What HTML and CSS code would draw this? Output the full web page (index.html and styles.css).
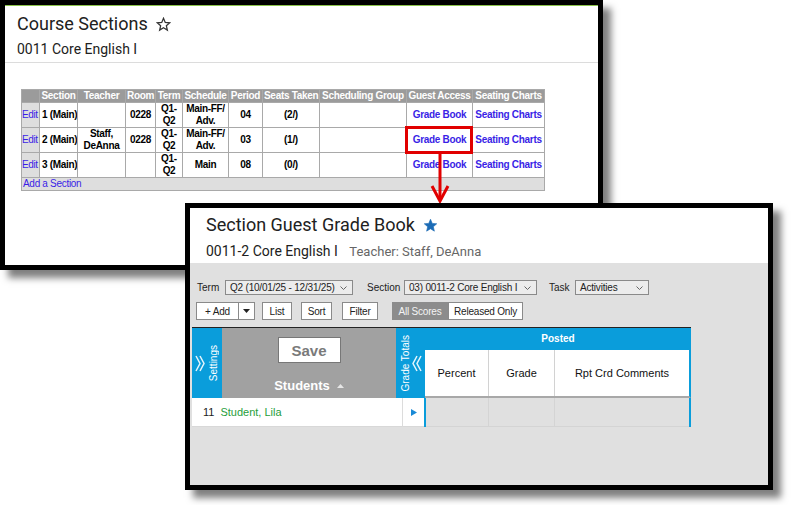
FILE: index.html
```html
<!DOCTYPE html>
<html lang="en">
<head>
  <meta charset="UTF-8">
  <meta name="viewport" content="width=device-width, initial-scale=1.0">
  <title>Course Sections - Guest Grade Book</title>
  <link rel="stylesheet" href="styles.css">
</head>
<body>
  <div class="desk">

    <!-- back window: course sections list -->
    <div class="win win-sections">
      <div class="win-head">
        <h1 class="title">Course Sections
          <svg class="star" viewBox="0 0 24 24"><path d="M12 17.27L18.18 21l-1.64-7.03L22 9.24l-7.19-.61L12 2 9.19 8.63 2 9.24l5.46 4.73L5.82 21z"/></svg>
        </h1>
        <div class="subtitle">0011 Core English I</div>
      </div>

      <table class="sections">
        <thead>
          <tr>
            <th class="c-edit"></th>
            <th class="c-section">Section</th>
            <th class="c-teacher">Teacher</th>
            <th class="c-room">Room</th>
            <th class="c-term">Term</th>
            <th class="c-schedule">Schedule</th>
            <th class="c-period">Period</th>
            <th class="c-seats">Seats Taken</th>
            <th class="c-group">Scheduling Group</th>
            <th class="c-guest">Guest Access</th>
            <th class="c-charts">Seating Charts</th>
          </tr>
        </thead>
        <tbody>
          <tr>
            <td class="edit"><a href="#">Edit</a></td>
            <td class="left">1 (Main)</td>
            <td></td>
            <td>0228</td>
            <td>Q1-<br>Q2</td>
            <td>Main-FF/<br>Adv.</td>
            <td>04</td>
            <td>(2/)</td>
            <td></td>
            <td><a href="#">Grade Book</a></td>
            <td><a href="#">Seating Charts</a></td>
          </tr>
          <tr>
            <td class="edit"><a href="#">Edit</a></td>
            <td class="left">2 (Main)</td>
            <td>Staff,<br>DeAnna</td>
            <td>0228</td>
            <td>Q1-<br>Q2</td>
            <td>Main-FF/<br>Adv.</td>
            <td>03</td>
            <td>(1/)</td>
            <td></td>
            <td><a href="#">Grade Book</a></td>
            <td><a href="#">Seating Charts</a></td>
          </tr>
          <tr>
            <td class="edit"><a href="#">Edit</a></td>
            <td class="left">3 (Main)</td>
            <td></td>
            <td></td>
            <td>Q1-<br>Q2</td>
            <td>Main</td>
            <td>08</td>
            <td>(0/)</td>
            <td></td>
            <td><a href="#">Grade Book</a></td>
            <td><a href="#">Seating Charts</a></td>
          </tr>
          <tr>
            <td class="add-row" colspan="11"><a href="#">Add a Section</a></td>
          </tr>
        </tbody>
      </table>
    </div>

    <!-- callout from the link to the grade book window -->
    <div class="callout"></div>
    <svg class="callout-arrow" viewBox="0 0 30 55">
      <line x1="15" y1="3" x2="15" y2="50"/>
      <polyline points="7,36 15,51 23,36"/>
    </svg>

    <!-- front window: guest grade book -->
    <div class="win win-gradebook">
      <div class="win-head">
        <h1 class="title">Section Guest Grade Book
          <svg class="star star-on" viewBox="0 0 24 24"><path d="M12 17.27L18.18 21l-1.64-7.03L22 9.24l-7.19-.61L12 2 9.19 8.63 2 9.24l5.46 4.73L5.82 21z"/></svg>
        </h1>
        <div class="subtitle">0011-2 Core English I <span class="teacher">Teacher: Staff, DeAnna</span></div>
      </div>

      <div class="gb-body">
        <div class="filters">
          <label class="l-term">Term</label>
          <div class="picker w-term">Q2 (10/01/25 - 12/31/25)
            <svg viewBox="0 0 7 4"><polyline points="0.5,0.5 3.5,3.5 6.5,0.5"/></svg>
          </div>
          <label class="l-section">Section</label>
          <div class="picker w-section">03) 0011-2 Core English I
            <svg viewBox="0 0 7 4"><polyline points="0.5,0.5 3.5,3.5 6.5,0.5"/></svg>
          </div>
          <label class="l-task">Task</label>
          <div class="picker w-task">Activities
            <svg viewBox="0 0 7 4"><polyline points="0.5,0.5 3.5,3.5 6.5,0.5"/></svg>
          </div>
        </div>

        <div class="actions">
          <button class="btn b-add">+ Add</button>
          <button class="btn b-caret"><svg viewBox="0 0 7 4"><path d="M0 0h7L3.5 4z"/></svg></button>
          <button class="btn b-list">List</button>
          <button class="btn b-sort">Sort</button>
          <button class="btn b-filter">Filter</button>
          <button class="btn b-all">All Scores</button>
          <button class="btn b-released">Released Only</button>
        </div>

        <div class="gb-grid">
          <div class="gb-top">
            <div class="side-tab settings">
              <svg class="chev" viewBox="0 0 10 19"><polyline points="1,2 5,9.5 1,17"/><polyline points="5,2 9,9.5 5,17"/></svg>
              <span class="tab-label">Settings</span>
            </div>
            <div class="students-head">
              <button class="save-btn">Save</button>
              <div class="students-title">Students
                <svg class="sort-up" viewBox="0 0 7 4"><path d="M0 4L3.5 0L7 4z"/></svg>
              </div>
            </div>
            <div class="side-tab totals">
              <span class="tab-label">Grade Totals</span>
              <svg class="chev" viewBox="0 0 10 19"><polyline points="5,2 1,9.5 5,17"/><polyline points="9,2 5,9.5 9,17"/></svg>
            </div>
            <div class="posted">
              <div class="posted-title">Posted</div>
              <div class="posted-cols">
                <div class="p-percent">Percent</div>
                <div class="p-grade">Grade</div>
                <div class="p-comments">Rpt Crd Comments</div>
              </div>
            </div>
          </div>

          <div class="gb-row">
            <div class="student-cell"><span class="num">11</span><span class="name">Student, Lila</span></div>
            <div class="expand-cell"><svg viewBox="0 0 6 7"><path d="M0 0L6 3.5L0 7z"/></svg></div>
            <div class="scores">
              <div class="p-percent"></div>
              <div class="p-grade"></div>
              <div class="p-comments"></div>
            </div>
          </div>
        </div>
      </div>
    </div>

  </div>
</body>
</html>
```

FILE: styles.css
```css
* {
  box-sizing: border-box;
}

body {
  margin: 0;
  background-color: #fff;
  font-family: "Liberation Sans", Arial, sans-serif;
}

.desk {
  position: relative;
  width: 798px;
  height: 505px;
  overflow: hidden;
}

/* windows */

.win {
  position: absolute;
  background-color: #fff;
  border: 5px solid #000;
  box-shadow: 8px 8px 7px rgba(0, 0, 0, 0.5);
}

.win-sections {
  left: 0;
  top: 0;
  width: 603px;
  height: 270px;
}

.win-gradebook {
  left: 185px;
  top: 203px;
  width: 588px;
  height: 287px;
  display: flex;
  flex-direction: column;
}

.win-head {
  font-family: Roboto, "Liberation Sans", sans-serif;
  color: #212121;
}

.win-sections .win-head {
  height: 58px;
  padding: 6px 0 0 12px;
  border-top: 1px solid #8bc34a;
  border-bottom: 1px solid #dcdcdc;
}

.win-gradebook .win-head {
  height: 55px;
  flex-shrink: 0;
  padding: 5px 0 0 16px;
}

.title {
  display: flex;
  align-items: center;
  margin: 0;
  font-size: 18px;
  font-weight: 400;
  line-height: 24px;
}

.star {
  width: 15px;
  height: 15px;
  margin-left: 8px;
  fill: none;
  stroke: #333;
  stroke-width: 2;
}

.star.star-on {
  fill: #1c6cb6;
  stroke: #1c6cb6;
  stroke-width: 1;
}

.subtitle {
  margin-top: 4px;
  font-size: 14px;
  line-height: 18px;
}

.win-gradebook .subtitle {
  margin-top: 5px;
}

.subtitle .teacher {
  margin-left: 8px;
  font-size: 13px;
  color: #666;
}

/* sections table */

.sections {
  margin: 26px 0 0 16px;
  width: 523px;
  border-collapse: collapse;
  table-layout: fixed;
  font-size: 10px;
  letter-spacing: -0.3px;
}

.sections th,
.sections td {
  border: 1px solid #a9a9a9;
  padding: 0 1px;
  text-align: center;
  font-weight: bold;
  line-height: 12px;
  white-space: nowrap;
  overflow: hidden;
}

.sections th {
  height: 13px;
  background-color: #9b9b9b;
  color: #fff;
}

.sections td {
  height: 25px;
  color: #000;
}

.sections a {
  color: #3a1fe6;
  text-decoration: none;
}

.sections .edit {
  padding: 0;
  text-align: left;
  font-weight: normal;
  letter-spacing: -0.4px;
  overflow: visible;
  background-color: #dedede;
}

.sections .left {
  padding-left: 2px;
  text-align: left;
}

.sections .add-row {
  height: 12px;
  text-align: left;
  font-weight: normal;
  background-color: #dedede;
}

.c-edit { width: 18px; }
.c-section { width: 38px; }
.c-teacher { width: 48px; }
.c-room { width: 30px; }
.c-term { width: 27px; }
.c-schedule { width: 46px; }
.c-period { width: 34px; }
.c-seats { width: 57px; }
.c-group { width: 87px; }
.c-guest { width: 66px; }
.c-charts { width: 72px; }

/* red callout */

.callout {
  position: absolute;
  left: 405px;
  top: 126px;
  width: 68px;
  height: 28px;
  border: 3px solid #e10000;
}

.callout-arrow {
  position: absolute;
  left: 425px;
  top: 150px;
  width: 30px;
  height: 55px;
  fill: none;
  stroke: #e10000;
  stroke-width: 3;
}

/* grade book */

.gb-body {
  flex: 1;
  padding-top: 17px;
  background-color: #e0e0e0;
  font-size: 10px;
  color: #222;
}

.filters {
  display: flex;
  align-items: center;
  height: 15px;
  margin-bottom: 7px;
  padding-left: 7px;
}

.filters label {
  flex-shrink: 0;
}

.l-term { width: 28px; }
.l-section { width: 37px; }
.l-task { width: 26px; }

.picker {
  display: flex;
  align-items: center;
  justify-content: space-between;
  height: 15px;
  padding: 0 5px 0 4px;
  border: 1px solid #8a8a8a;
  background-color: #ececec;
  white-space: nowrap;
  letter-spacing: -0.2px;
}

.picker svg {
  width: 7px;
  height: 4px;
  fill: none;
  stroke: #666;
}

.w-term { width: 128px; margin-right: 14px; }
.w-section { width: 133px; margin-right: 12px; }
.w-task { width: 74px; }

.actions {
  display: flex;
  height: 18px;
  margin-bottom: 7px;
  padding-left: 6px;
}

.btn {
  display: flex;
  align-items: center;
  justify-content: center;
  height: 18px;
  padding: 0;
  border: 1px solid #8a8a8a;
  background-color: #fff;
  color: #222;
  font-family: inherit;
  font-size: 10px;
  letter-spacing: -0.2px;
}

.btn svg {
  width: 7px;
  height: 4px;
  fill: #222;
}

.b-add { width: 43px; }
.b-caret { width: 16px; border-left: none; }
.b-list { width: 30px; margin-left: 7px; }
.b-sort { width: 31px; margin-left: 9px; }
.b-filter { width: 36px; margin-left: 10px; }

.b-all {
  width: 56px;
  margin-left: 14px;
  border-color: #8c8c8c;
  background-color: #8c8c8c;
  color: #f4f4f4;
}

.b-released { width: 75px; }

.gb-grid {
  width: 499px;
  margin-left: 2px;
  border-top: 1px solid #222;
}

.gb-top {
  display: flex;
  height: 70px;
}

.side-tab {
  display: flex;
  align-items: center;
  justify-content: center;
  gap: 3px;
  background-color: #0a9ddb;
  color: #fff;
}

.settings { width: 30px; }
.totals { width: 29px; gap: 1px; }

.tab-label {
  writing-mode: vertical-rl;
  transform: rotate(180deg);
  font-size: 10px;
  line-height: 11px;
}

.chev {
  width: 10px;
  height: 19px;
  fill: none;
  stroke: #e4f5fc;
  stroke-width: 1.5;
}

.students-head {
  display: flex;
  flex-direction: column;
  align-items: center;
  width: 174px;
  padding-top: 9px;
  background-color: #a1a1a1;
}

.save-btn {
  width: 63px;
  height: 26px;
  padding: 0;
  border: 1px solid #777;
  background-color: #fff;
  color: #7a7a7a;
  font-family: inherit;
  font-size: 15px;
  font-weight: bold;
}

.students-title {
  display: flex;
  align-items: center;
  margin-top: 15px;
  color: #fff;
  font-size: 13px;
  font-weight: bold;
  line-height: 16px;
}

.sort-up {
  width: 7px;
  height: 4px;
  margin-left: 7px;
  fill: #e6e6e6;
}

.posted {
  width: 266px;
}

.posted-title {
  height: 22px;
  background-color: #0a9ddb;
  color: #fff;
  font-size: 10px;
  font-weight: bold;
  line-height: 22px;
  text-align: center;
}

.posted-cols {
  display: flex;
  height: 48px;
  border-right: 2px solid #0a9ddb;
  border-bottom: 2px solid #a8a8a8;
  background-color: #fff;
  font-size: 11px;
  color: #111;
}

.posted-cols div {
  display: flex;
  align-items: center;
  justify-content: center;
  border-right: 1px solid #d2d2d2;
}

.posted-cols .p-percent { width: 64px; }
.posted-cols .p-grade { width: 66px; }
.posted-cols .p-comments { flex: 1; border-right: none; }

.gb-row {
  display: flex;
  height: 29px;
}

.student-cell {
  display: flex;
  align-items: center;
  width: 210px;
  padding-left: 11px;
  background-color: #fff;
  border-bottom: 1px solid #d8d8d8;
  font-size: 11px;
}

.student-cell .num {
  margin-right: 6px;
  color: #222;
}

.student-cell .name {
  color: #1f9e3b;
}

.expand-cell {
  display: flex;
  align-items: center;
  justify-content: center;
  width: 22px;
  background-color: #fff;
  border-left: 1px solid #dcdcdc;
  border-bottom: 1px solid #d8d8d8;
}

.expand-cell svg {
  width: 6px;
  height: 7px;
  fill: #1a8ad6;
}

.scores {
  display: flex;
  width: 267px;
  border-left: 2px solid #0a9ddb;
  border-right: 2px solid #0a9ddb;
}

.scores div {
  border-right: 1px solid #d4d4d4;
  border-bottom: 1px solid #d4d4d4;
}

.scores .p-percent { width: 63px; }
.scores .p-grade { width: 66px; }
.scores .p-comments { flex: 1; border-right: none; }
```
